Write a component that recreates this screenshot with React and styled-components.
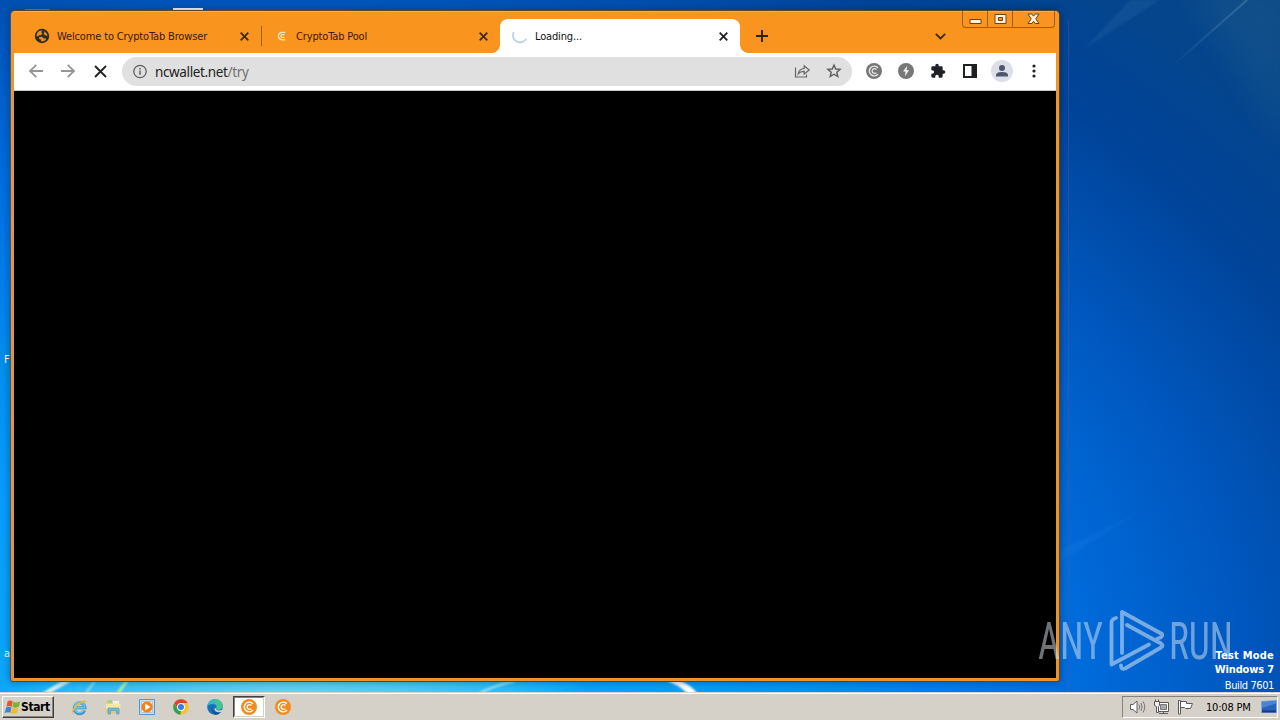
import React from "react";
import styled, { createGlobalStyle, css } from "styled-components";

const ui = `"DejaVu Sans Condensed", "DejaVu Sans", "Noto Sans", sans-serif`;

const GlobalStyle = createGlobalStyle`
  * { box-sizing: border-box; }
  body { margin: 0; overflow: hidden; font-family: ${ui}; font-stretch: condensed; font-size: 11px; }
  svg { display: block; flex: none; }
`;

const Screen = styled.div`
  position: relative;
  width: 1280px;
  height: 720px;
  overflow: hidden;
  display: flex;
  flex-direction: column;
`;

const Desktop = styled.main`
  position: relative;
  flex: 1;
  background: radial-gradient(1000px 720px at 290px 700px,
    #62d2f2 0%, #4fcbf5 10%, #2cbcff 21%, #08a4fa 30%, #089cfa 41%, #008fec 55%,
    #0080f0 63%, #006ddd 78%, #0058c0 95%, #0050b0 102%, #00449a 113%, #04458c 128%, #0c4884 145%);
`;

const Wallpaper = styled.svg`
  position: absolute;
  inset: 0;
`;

const IconCaption = styled.span`
  position: absolute;
  left: 4px;
  top: ${(p) => p.$top}px;
  width: 8px;
  overflow: hidden;
  color: #fff;
  line-height: 14px;
`;

const Window = styled.section`
  position: absolute;
  left: 10px;
  top: 10px;
  width: 1050px;
  height: 672px;
  display: flex;
  flex-direction: column;
  padding: 1px 3px 3px;
  border: 1px solid #5c4325;
  border-left-color: #2a5d96;
  border-radius: 5px 5px 3px 3px;
  background: linear-gradient(#fbb05a 1px, #f9941e 1px, #f9941e 42px, #ec9630 90px, #e8932e);
  box-shadow: 0 0 7px 1px rgba(0, 20, 50, 0.35);
`;

const TabStrip = styled.header`
  height: 41px;
  flex: none;
  display: flex;
  align-items: flex-end;
  padding-left: 8px;
  background: #f9941e;
`;

const Tab = styled.div`
  position: relative;
  width: ${(p) => (p.$active ? 240 : 239)}px;
  height: 34px;
  display: flex;
  align-items: center;
  gap: 7px;
  padding: 0 12px;
  color: ${(p) => (p.$active ? "#111" : "#3a1806")};
  ${(p) => p.$divided && css`
    background: linear-gradient(#9e611d, #9e611d) 0 7px / 1px 20px no-repeat;
  `}
  ${(p) => p.$active && css`
    background: #fff;
    border-radius: 8px 8px 0 0;
    &::before, &::after {
      content: "";
      position: absolute;
      bottom: 0;
      width: 8px;
      height: 8px;
    }
    &::before { left: -8px; background: radial-gradient(circle at 0 0, transparent 7.5px, #fff 8px); }
    &::after { right: -8px; background: radial-gradient(circle at 100% 0, transparent 7.5px, #fff 8px); }
  `}
`;

const TabTitle = styled.span`
  flex: 1;
  padding-top: 2px;
  white-space: nowrap;
  line-height: 14px;
  letter-spacing: -0.15px;
`;

const StripButton = styled.div`
  width: 28px;
  height: 34px;
  margin-left: ${(p) => p.$push};
  display: flex;
  align-items: center;
  justify-content: center;
`;

const WindowControls = styled.div`
  align-self: flex-start;
  display: flex;
  width: 93px;
  height: 17px;
  margin: -1px 1px 0 8px;
  border: 1px solid #97601f;
  border-top: 0;
  border-radius: 0 0 4px 4px;
`;

const ControlButton = styled.div`
  width: ${(p) => p.$width}px;
  display: flex;
  align-items: center;
  justify-content: center;
  border-right: ${(p) => (p.$last ? "0" : "1px solid #97601f")};
`;

const Toolbar = styled.nav`
  height: 38px;
  flex: none;
  display: flex;
  align-items: center;
  padding: 0 6px;
  background: #fff;
  border-bottom: 1px solid #c9c9c9;
`;

const ToolButton = styled.div`
  width: 32px;
  height: 32px;
  display: flex;
  align-items: center;
  justify-content: center;
  padding-bottom: 1px;
`;

const Omnibox = styled.div`
  width: 730px;
  height: 29px;
  margin: 0 6px;
  display: flex;
  align-items: center;
  padding: 0 2px 0 10px;
  border-radius: 15px;
  background: #e0e0e0;
`;

const Address = styled.span`
  flex: 1;
  padding-left: 7px;
  font: 13.5px/18px "Noto Sans", "Open Sans", sans-serif;
  letter-spacing: -0.36px;
  color: #222;
  em { font-style: normal; color: #707070; }
`;

const Page = styled.div`
  flex: 1;
  background: #000;
`;

const Watermark = styled.svg`
  position: absolute;
  left: 1034px;
  top: 605px;
`;

const BuildInfo = styled.div`
  position: absolute;
  right: 6px;
  top: 649px;
  display: flex;
  flex-direction: column;
  align-items: flex-end;
  color: #fff;
  line-height: 14px;
  white-space: nowrap;
`;

const BuildLine = styled.span`
  font-weight: ${(p) => (p.$bold ? 700 : 400)};
  letter-spacing: ${(p) => p.$track || 0}px;
  margin-top: ${(p) => (p.$bold ? 0 : 2)}px;
`;

const Taskbar = styled.footer`
  position: relative;
  height: 28px;
  flex: none;
  display: flex;
  align-items: center;
  padding: 3px 2px 1px;
  background: linear-gradient(#d8d4cc 1px, #fff 1px, #fff 2px, #d5d0c8 2px);
`;

const StartButton = styled.div`
  width: 52px;
  height: 22px;
  display: flex;
  align-items: center;
  padding-left: 1px;
  border: 1px solid;
  border-color: #fff #404040 #404040 #fff;
  box-shadow: inset -1px -1px 0 #87837c;
  font-size: 12px;
  font-weight: 700;
  letter-spacing: -0.4px;
  color: #000;
`;

const QuickLaunch = styled.div`
  display: flex;
  align-items: center;
  margin-left: 8px;
`;

const LaunchItem = styled.div`
  width: 34px;
  height: 22px;
  display: flex;
  align-items: center;
  justify-content: center;
  ${(p) => p.$pressed && css`
    width: 32px;
    margin: 0 1px;
    background: #fff;
    border: 1px solid;
    border-color: #404040 #fff #fff #404040;
    box-shadow: inset -1px -1px 0 #d5d0c8, inset 1px 1px 0 #87837c;
  `}
`;

const Tray = styled.div`
  width: 156px;
  height: 22px;
  margin-left: auto;
  display: flex;
  align-items: center;
  padding-left: 2px;
  border: 1px solid;
  border-color: #87837c #fff #fff #87837c;
`;

const TrayIcon = styled.div`
  width: 24px;
  display: flex;
  justify-content: center;
  &:last-child { width: 17px; margin-left: auto; }
`;

const Clock = styled.span`
  margin-left: 9px;
  padding-top: 1px;
  letter-spacing: -0.2px;
  white-space: nowrap;
  color: #000;
`;

const Globe = () => (
  <svg width="16" height="16" viewBox="0 0 16 16">
    <circle cx="8" cy="8" r="7.2" fill="#2f2a22" />
    <path d="M3 5.5C4 3.200 6 2.300 8 2.500L7.300 4.300 8.400 5.600 6.800 7.200 5 7.300 4.200 8.500 2.400 8zM9.500 3.200C11.800 3.700 13.400 5.800 13.400 8L11.200 7.300 9.600 5.900 10.400 4.700zM5 9.300L8.200 8.800 9.600 10.500 11.600 10.200 12 11.500C10.800 13 8.800 13.800 7 13.300L7.300 11.700 5.200 11z" fill="#e58f27" />
  </svg>
);

const CoinMark = ({ size = 16, disc, ink = "#fff" }) => (
  <svg width={size} height={size} viewBox="0 0 16 16" fill="none" stroke={ink}>
    {disc && <circle cx="8" cy="8" r="8" fill={disc} stroke="none" />}
    <path d="M12.300 4.300H8.600A4.100 3.900 0 0 0 8.600 11.900H12.300" strokeWidth="1.300" />
    <path d="M11.600 6.600H9A1.500 1.500 0 0 0 9 9.500H11.600" strokeWidth="1.200" />
  </svg>
);

const CoinRound = ({ disc, ink = "#fff" }) => (
  <svg width="16" height="16" viewBox="0 0 16 16" fill="none" stroke={ink}>
    {disc && <circle cx="8" cy="8" r="8" fill={disc} stroke="none" />}
    <path d="M12 4.900A4.900 4.900 0 1 0 12 11.100" strokeWidth="1.400" />
    <path d="M10.400 6.500A2.400 2.400 0 1 0 10.400 9.600" strokeWidth="1.300" />
  </svg>
);

const Spinner = () => (
  <svg width="16" height="16" viewBox="0 0 16 16">
    <path d="M1.800 3.800A7 7 0 1 0 14.300 10.700" fill="none" stroke="#b5d0ea" strokeWidth="1.6" />
  </svg>
);

const Cross = ({ color = "#3f2e20", size = 9, weight = 1.8 }) => (
  <svg width={size} height={size} viewBox="0 0 9 9">
    <path d="M.7.7L8.3 8.3M8.3.7L.7 8.3" stroke={color} strokeWidth={weight} />
  </svg>
);

const Arrow = ({ flip }) => (
  <svg width="16" height="16" viewBox="0 0 16 16" fill="none" stroke="#969696" strokeWidth="1.8" transform={flip ? "scale(-1 1)" : undefined}>
    <path d="M15 8H2.5M8.3 1.8L2 8L8.3 14.2" />
  </svg>
);

const Info = () => (
  <svg width="16" height="16" viewBox="0 0 16 16">
    <circle cx="8" cy="7.500" r="6.200" fill="none" stroke="#5f6062" strokeWidth="1.3" />
    <path d="M8 6.500V10.700M8 4V5.500" stroke="#5f6062" strokeWidth="1.5" />
  </svg>
);

const Share = () => (
  <svg width="17" height="16" viewBox="0 0 17 16" fill="none" stroke="#666" strokeWidth="1.2">
    <path d="M1.5 4.5V14H12.5V11.5M4.2 11C4.7 7.5 6.6 5.7 10.2 5.5V2.7L15.2 7 10.2 11V8.4C7.5 8.3 5.8 9 4.2 11Z" />
  </svg>
);

const Star = () => (
  <svg width="16" height="16" viewBox="0 0 16 16" fill="none" stroke="#5e5e5e" strokeWidth="1.4">
    <path d="M8 2L9.7 6 14.1 6.4 10.8 9.2 11.8 13.5 8 11.2 4.2 13.5 5.2 9.2 1.9 6.4 6.3 6Z" />
  </svg>
);

const Bolt = () => (
  <svg width="16" height="16" viewBox="0 0 16 16">
    <circle cx="8" cy="8" r="8" fill="#777" />
    <path d="M9.200 2.800L5 8.600H7.500L6.900 13.200L11.100 7.200H8.500Z" fill="#f4f4f4" />
  </svg>
);

const Puzzle = () => (
  <svg width="16" height="16" viewBox="0 0 24 24" fill="#1d2024">
    <path d="M20.5 11H19V7a2 2 0 0 0-2-2h-4V3.5a2.5 2.5 0 0 0-5 0V5H4a2 2 0 0 0-2 2v3.8h1.5a2.7 2.7 0 0 1 0 5.4H2V20c0 1.1.9 2 2 2h3.8v-1.5a2.7 2.7 0 0 1 5.4 0V22H17a2 2 0 0 0 2-2v-4h1.5a2.5 2.5 0 0 0 0-5z" />
  </svg>
);

const SidePanel = () => (
  <svg width="14" height="14" viewBox="0 0 14 14">
    <path d="M0 0H14V14H0ZM2 2V12H8.5V2Z" fill="#1d2024" fillRule="evenodd" />
  </svg>
);

const Avatar = () => (
  <svg width="22" height="22" viewBox="0 0 22 22">
    <circle cx="11" cy="11" r="11" fill="#dcdfe7" />
    <circle cx="11" cy="8" r="3" fill="#4e566e" />
    <path d="M5 16.5V15C5 12.6 8.7 12 11 12S17 12.6 17 15V16.5Z" fill="#4e566e" />
  </svg>
);

const Dots = () => (
  <svg width="4" height="14" viewBox="0 0 4 14" fill="#222">
    <circle cx="2" cy="2" r="1.6" /><circle cx="2" cy="7" r="1.6" /><circle cx="2" cy="12" r="1.6" />
  </svg>
);

const WindowsFlag = () => (
  <svg width="17" height="17" viewBox="0 0 16 16">
    <path d="M3.5 2.2Q6 .8 8.2 2.3L7.2 7.2Q4.8 5.9 2.3 7.2Z" fill="#e4572e" />
    <path d="M8.9 2.7Q11.7 4 15.200 2L14 7.4Q10.7 8.8 7.9 7.5Z" fill="#78b52d" />
    <path d="M2.1 8Q4.7 6.8 7 8L6 13Q3.5 11.5.5 13.500Z" fill="#3f83d5" />
    <path d="M7.7 8.4Q10.6 9.6 13.4 8.2L12.3 13Q9.5 14.7 6.6 13.3Z" fill="#f3bb25" />
  </svg>
);

const Explorer = () => (
  <svg width="17" height="17" viewBox="0 0 17 17" fill="none">
    <path d="M13.6 11.3A5.4 5.4 0 1 1 14 8.8H4.2" stroke="#3492cf" strokeWidth="3" />
    <path d="M13.2 11A5.2 5.2 0 1 1 13.8 8.7H4.2" stroke="#6cc8ef" strokeWidth="1.6" />
    <path d="M1.5 15.2C-.8 12.5 4 5.5 9.7 2.5C13 .7 16.3 1 15.5 4.4C15.2 2.5 13 2.4 10.4 4C5.6 6.9 1.4 12 1.5 15.2Z" fill="#e7bc34" />
  </svg>
);

const Folder = () => (
  <svg width="17" height="16" viewBox="0 0 17 16">
    <path d="M1 2H6L7.5 3.5H15V14H1Z" fill="#e4c66d" />
    <path d="M3 1H7V5H3Z" fill="#a5cf8b" />
    <path d="M8 2H14V5H8Z" fill="#e9f3f5" />
    <path d="M1 4.500H15.500V10H1Z" fill="#f6e7a5" />
    <path d="M3 9H14V15H11.500V11.500H5.500V15H3Z" fill="#6fb9df" stroke="#4f97c3" strokeWidth=".6" />
  </svg>
);

const MediaPlayer = () => (
  <svg width="16" height="16" viewBox="0 0 16 16">
    <path d="M.5.5H15.5V15.5H.5Z" fill="#c4e1f5" stroke="#5397cd" />
    <path d="M2.5 2.5H13.5V13.5H2.5Z" fill="#e9f4fb" stroke="#8ebde0" strokeWidth=".7" />
    <circle cx="8" cy="8" r="5.6" fill="#f48215" />
    <path d="M6.2 4.6L11.5 8L6.2 11.4Z" fill="#fff" />
  </svg>
);

const ChromeLogo = () => (
  <svg width="16" height="16" viewBox="0 0 16 16">
    <circle cx="8" cy="8" r="7.8" fill="#f7c22b" />
    <path d="M1.25 4.1A7.8 7.8 0 0 1 14.75 4.1H8L5 9.8Z" fill="#df4034" />
    <path d="M1.25 4.1L4.7 10L8 11.7L7.4 15.8A7.8 7.8 0 0 1 1.25 4.1Z" fill="#30a150" />
    <circle cx="8" cy="8" r="3.9" fill="#fff" /><circle cx="8" cy="8" r="3" fill="#3879e5" />
  </svg>
);

const EdgeLogo = () => (
  <svg width="16" height="16" viewBox="0 0 16 16">
    <circle cx="8" cy="8" r="7.8" fill="#1672bf" />
    <path d="M.3 7.2C1 2.8 4.3.2 8 .2C12.7.2 15.8 3.4 15.8 6.8C15.8 9.4 13.8 10.7 11.8 10.7C10 10.7 9 10 9.5 9.2C10.3 7.6 9 5.2 6 5C3.7 4.9 1.6 5.6.3 7.2Z" fill="#35b9c5" />
    <path d="M8 .2C12.7.2 15.8 3.4 15.8 6.8C15.8 9.4 13.8 10.7 11.8 10.7C10 10.7 9 10 9.5 9.2C10.3 7.6 10 4 6.5 2.6Z" fill="#4fc778" opacity=".7" />
    <path d="M5.8 6.6C4.2 9 5.8 13.5 10 13.5C12 13.5 13.5 12.8 14.6 12A7.8 7.8 0 0 1 8.5 15.8C5.2 14.5 3.2 9.5 5.8 6.6Z" fill="#144d92" />
    <path d="M9.300 8.600C8 11.200 11.600 12.700 16 10.500L15 13C11.200 14 7.300 12.600 7.500 9.800Z" fill="#d5d0c8" />
  </svg>
);

const Speaker = () => (
  <svg width="17" height="16" viewBox="0 0 17 16" fill="none" stroke="#5f5f5f">
    <path d="M1.5 5.5H4L8 2V14L4 10.5H1.5Z" fill="#fff" />
    <path d="M10 5.5Q11.5 8 10 10.5M12 4Q14.3 8 12 12M14 2.5Q17.5 8 14 13.5" stroke="#777" />
  </svg>
);

const Network = () => (
  <svg width="17" height="16" viewBox="0 0 17 16" fill="none" stroke="#5a5a5a">
    <path d="M4.500 3.500H15.500V12.500H4.500Z" fill="#fff" /><path d="M7.500 5.500H13.500V10.500H7.500Z" fill="#aaa" stroke="#777" />
    <path d="M6 14.500H15M10.500 12.500V14.500" />
    <path d="M1.500 2.500H6.500V6.500L5.500 7.500V13.500H3.500V7.500L1.500 6.500ZM2.500 2.500V.5M5.500 2.500V.5" fill="#eee" />
  </svg>
);

const ActionFlag = () => (
  <svg width="17" height="16" viewBox="0 0 17 16" fill="#fff" stroke="#5a5a5a">
    <path d="M1.5 1.5H3.5V15H1.5ZM3.5 2.5H9.5V4.5H15.5L13.5 9.5H8.5L7.5 8.5H3.5Z" />
  </svg>
);

const ShowDesktop = () => (
  <svg width="16" height="14" viewBox="0 0 16 14">
    <path d="M.5 1.5L15.5.5V12.5H.5Z" fill="#2762b9" stroke="#79a8dc" /><path d="M1 1.8L15 1V3.5L1 8Z" fill="#5c91d8" opacity=".7" />
    <path d="M1 10.5H15V12.5H1Z" fill="#163b79" />
  </svg>
);

const Streaks = () => (
  <Wallpaper width="1280" height="692" viewBox="0 0 1280 692">
    <defs>
      <filter id="soft" x="-20%" y="-20%" width="140%" height="140%"><feGaussianBlur stdDeviation="1.2" /></filter>
      <filter id="haze" x="-50%" y="-50%" width="200%" height="200%"><feGaussianBlur stdDeviation="14" /></filter>
      <linearGradient id="ray" x1="1" y1="0" x2="0" y2="1">
        <stop stopColor="#79a6cc" stopOpacity=".38" /><stop offset="1" stopColor="#79a6cc" stopOpacity="0" />
      </linearGradient>
    </defs>
    <path d="M1247 0L1170 68" fill="none" stroke="url(#ray)" strokeWidth="2" />
    <path d="M1160 0L1085 48L1130 0Z" fill="#4d91c5" opacity=".14" filter="url(#soft)" />
    <path d="M1290 -10H1190L1290 150Z" fill="#366f91" opacity=".2" filter="url(#haze)" />
    <path d="M1060 550L1140 512L1060 562Z" fill="#54a8ff" opacity=".08" filter="url(#soft)" />
    <path d="M1068.500 20V692" stroke="#6a5a9a" opacity=".35" />
    <g filter="url(#soft)">
      <path d="M42 693L62 681H72L50 693Z" fill="#d8f5ff" />
      <path d="M86 693L95 681" stroke="#9ee4f6" strokeWidth="2" />
      <path d="M118 693L127 681" stroke="#b8f1a4" strokeWidth="3" />
      <path d="M480 693Q495 685 515 681" fill="none" stroke="#a8ecff" strokeWidth="2" />
      <path d="M664 680Q678 684 688 694H698Q690 684 678 680Z" fill="#fff" />
    </g>
    <path d="M173 8H203V12H173Z" fill="#fff" /><path d="M25 9.500H50" stroke="#5485b8" strokeWidth="1" />
  </Wallpaper>
);

const AnyRunMark = () => (
  <Watermark width="206" height="72" viewBox="0 0 206 72">
    <g opacity=".5" fill="#dce6f0" fontFamily="Roboto, sans-serif" fontSize="51" fontWeight="400">
      <text x="4" y="54" textLength="65" lengthAdjust="spacingAndGlyphs">ANY</text>
      <text x="135" y="54" textLength="64" lengthAdjust="spacingAndGlyphs">RUN</text>
    </g>
    <g opacity=".58" fill="none" stroke="#cfe0f2" strokeWidth="3.8" strokeLinejoin="round" strokeLinecap="round">
      <path d="M82 13Q77.500 14 77.500 18V59.500L115 39.500" />
      <path d="M123.500 33.500Q129 32.500 128 29L88 7V48" />
      <path d="M93 20L127 38.500Q130 40.500 127 42.500L91 63.500Q87 65 87 60.500" />
    </g>
  </Watermark>
);

export default function App() {
  return (
    <Screen>
      <GlobalStyle />
      <Desktop>
        <Streaks />
        <IconCaption $top={353}>F</IconCaption>
        <IconCaption $top={647}>a</IconCaption>
        <Window>
          <TabStrip>
            <Tab>
              <Globe />
              <TabTitle>Welcome to CryptoTab Browser</TabTitle>
              <Cross />
            </Tab>
            <Tab $divided>
              <CoinMark ink="#ffe8c4" />
              <TabTitle>CryptoTab Pool</TabTitle>
              <Cross />
            </Tab>
            <Tab $active>
              <Spinner />
              <TabTitle>Loading...</TabTitle>
              <Cross color="#222" />
            </Tab>
            <StripButton $push="8px">
              <svg width="12" height="12" viewBox="0 0 12 12"><path d="M6 0V12M0 6H12" stroke="#2c2117" strokeWidth="1.9" /></svg>
            </StripButton>
            <StripButton $push="auto">
              <svg width="11" height="7" viewBox="0 0 11 7"><path d="M.8.8L5.500 5.500L10.200.8" fill="none" stroke="#3b2816" strokeWidth="1.8" /></svg>
            </StripButton>
            <WindowControls>
              <ControlButton $width={25}>
                <svg width="13" height="12" viewBox="0 0 13 12"><path d="M1 6.500H12V10.500H1Z" fill="#fff1dc" stroke="#70420f" /></svg>
              </ControlButton>
              <ControlButton $width={25}>
                <svg width="13" height="12" viewBox="0 0 13 12"><path d="M1 1.500H12V10.500H1ZM4.500 4.500V7.500H8.500V4.500Z" fill="#fff1dc" fillRule="evenodd" stroke="#70420f" /></svg>
              </ControlButton>
              <ControlButton $width={41} $last>
                <svg width="13" height="12" viewBox="0 0 13 12"><path d="M1 1H4.800L6.500 3.200L8.200 1H12L8.800 5.800L12 10.500H8.200L6.500 8.300L4.800 10.500H1L4.200 5.800Z" fill="#fff1dc" stroke="#70420f" /></svg>
              </ControlButton>
            </WindowControls>
          </TabStrip>
          <Toolbar>
            <ToolButton><Arrow /></ToolButton>
            <ToolButton><Arrow flip /></ToolButton>
            <ToolButton><Cross size={13} weight={1.3} color="#222" /></ToolButton>
            <Omnibox>
              <Info />
              <Address>ncwallet.net<em>/try</em></Address>
              <ToolButton><Share /></ToolButton>
              <ToolButton><Star /></ToolButton>
            </Omnibox>
            <ToolButton><CoinRound disc="#777" ink="#e8e8e8" /></ToolButton>
            <ToolButton><Bolt /></ToolButton>
            <ToolButton><Puzzle /></ToolButton>
            <ToolButton><SidePanel /></ToolButton>
            <ToolButton><Avatar /></ToolButton>
            <ToolButton><Dots /></ToolButton>
          </Toolbar>
          <Page />
        </Window>
      </Desktop>
      <AnyRunMark />
      <BuildInfo>
        <BuildLine $bold $track={0.22}>Test Mode</BuildLine>
        <BuildLine $bold $track={-0.15}>Windows 7</BuildLine>
        <BuildLine $track={-0.4}>Build 7601</BuildLine>
      </BuildInfo>
      <Taskbar>
        <StartButton><WindowsFlag />Start</StartButton>
        <QuickLaunch>
          <LaunchItem><Explorer /></LaunchItem>
          <LaunchItem><Folder /></LaunchItem>
          <LaunchItem><MediaPlayer /></LaunchItem>
          <LaunchItem><ChromeLogo /></LaunchItem>
          <LaunchItem><EdgeLogo /></LaunchItem>
          <LaunchItem $pressed><CoinRound disc="#f38b1d" /></LaunchItem>
          <LaunchItem><CoinRound disc="#f38b1d" /></LaunchItem>
        </QuickLaunch>
        <Tray>
          <TrayIcon><Speaker /></TrayIcon>
          <TrayIcon><Network /></TrayIcon>
          <TrayIcon><ActionFlag /></TrayIcon>
          <Clock>10:08 PM</Clock>
          <TrayIcon><ShowDesktop /></TrayIcon>
        </Tray>
      </Taskbar>
    </Screen>
  );
}
